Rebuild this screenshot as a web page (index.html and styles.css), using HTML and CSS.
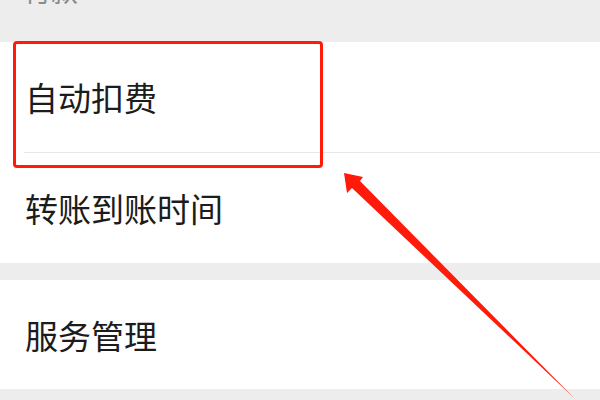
FILE: index.html
```html
<!DOCTYPE html>
<html lang="zh-CN">
<head>
<meta charset="utf-8">
<link rel="stylesheet" href="styles.css">
</head>
<body>
<div class="page">
  <div class="section-title">付款</div>
  <div class="group">
    <div class="row row-first">自动扣费</div>
    <div class="divider"></div>
    <div class="row">转账到账时间</div>
  </div>
  <div class="gap"></div>
  <div class="group">
    <div class="row row-last">服务管理</div>
  </div>
  <div class="highlight"></div>
  <svg class="arrow" width="600" height="400" viewBox="0 0 600 400">
    <polygon points="344,173 363,177 360,181 575,399 352,188 347,193" fill="#ff1a0a"/>
  </svg>
</div>
</body>
</html>
```
FILE: styles.css
```css
html, body {
  margin: 0;
  padding: 0;
  background: #ededed;
}
.page {
  position: relative;
  width: 600px;
  height: 400px;
  overflow: hidden;
  font-family: "Noto Sans CJK SC", "Noto Sans", sans-serif;
}
.section-title {
  height: 42px;
  box-sizing: border-box;
  padding-left: 24px;
  font-size: 27px;
  line-height: 27px;
  color: #8a8a8a;
  margin-top: -23px;
  height: 65px;
}
.group {
  background: #ffffff;
}
.row {
  height: 110px;
  display: flex;
  align-items: center;
  padding-left: 25px;
  font-size: 33px;
  color: #1c1c1c;
}
.row-last {
  height: 109px;
}
.divider {
  height: 1px;
  margin-left: 24px;
  background: #e8e8e8;
}
.gap {
  height: 17px;
}
.highlight {
  position: absolute;
  left: 13px;
  top: 41px;
  width: 304px;
  height: 121px;
  border: 3px solid #ff1a0a;
  border-radius: 4px;
}
.arrow {
  position: absolute;
  left: 0;
  top: 0;
}
```
